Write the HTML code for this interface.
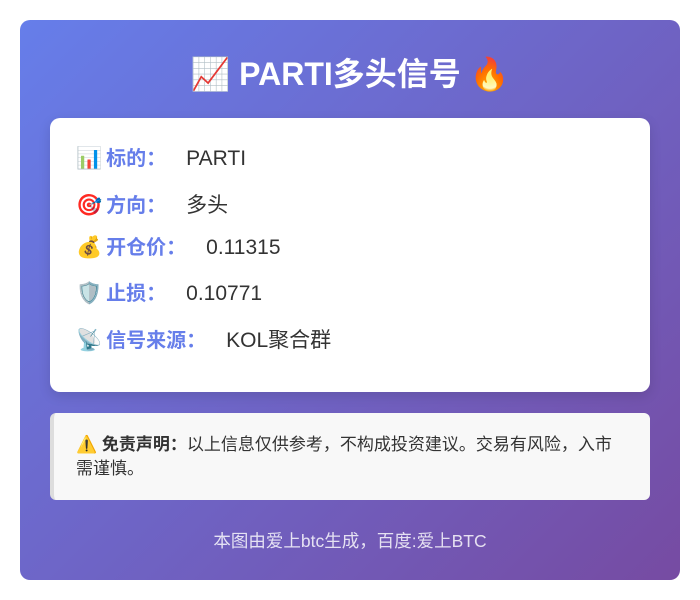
<!DOCTYPE html>
<html><head><meta charset="utf-8"><style>
*{margin:0;padding:0;box-sizing:border-box}
body{width:700px;height:600px;background:#fff;font-family:"Liberation Sans","Noto Sans CJK SC",sans-serif;position:relative;overflow:hidden}
.card{position:absolute;left:20px;top:20px;width:660px;height:560px;border-radius:10px;background:linear-gradient(135deg,#667eea 0%,#764ba2 100%)}
h1{position:absolute;left:0;width:660px;top:35px;text-align:center;color:#fff;font-size:32px;font-weight:bold;line-height:38px}
.box{position:absolute;left:30px;top:98px;width:600px;height:274px;background:#fff;border-radius:10px;box-shadow:0 4px 12px rgba(0,0,0,.12)}
.row{position:absolute;left:26px;font-size:21px;line-height:28px;color:#333;white-space:nowrap}
.row b{color:#667eea;font-size:20px;margin-left:4px;margin-right:20px}
.disc{position:absolute;left:30px;top:393px;width:600px;height:87px;background:#f8f8f8;border-left:4px solid #ddd;border-radius:6px;padding:20px 30px 0 22px;font-size:17px;line-height:24px;color:#333}
.foot{position:absolute;left:0;width:660px;top:508px;text-align:center;color:rgba(255,255,255,.82);font-size:17.5px}
</style></head><body>
<div class="card">
<h1>📈 PARTI多头信号 🔥</h1>
<div class="box">
<div class="row" style="top:27px">📊<b>标的：</b>PARTI</div>
<div class="row" style="top:74px">🎯<b>方向：</b>多头</div>
<div class="row" style="top:116px">💰<b>开仓价：</b>0.11315</div>
<div class="row" style="top:162px">🛡️<b>止损：</b>0.10771</div>
<div class="row" style="top:209px">📡<b>信号来源：</b>KOL聚合群</div>
</div>
<div class="disc">⚠️ <b>免责声明：</b>以上信息仅供参考，不构成投资建议。交易有风险，入市需谨慎。</div>
<div class="foot">本图由爱上btc生成，百度:爱上BTC</div>
</div>
</body></html>
